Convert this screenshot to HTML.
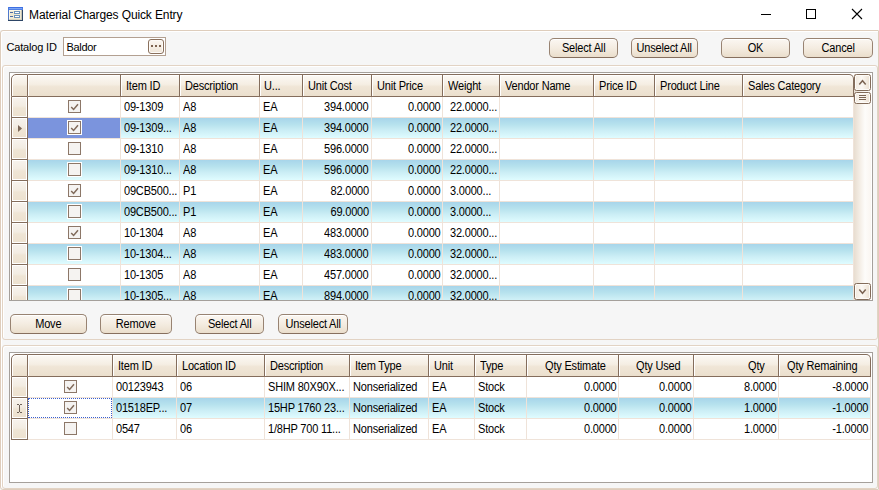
<!DOCTYPE html>
<html><head><meta charset="utf-8"><title>Material Charges Quick Entry</title>
<style>
*{box-sizing:border-box;margin:0;padding:0}
html,body{width:879px;height:490px;overflow:hidden;background:#f6f6f6}
body{position:relative;font-family:"Liberation Sans",sans-serif;font-size:11px;color:#000;letter-spacing:-0.18px}
.a{position:absolute}
.t{position:absolute;white-space:nowrap;line-height:20px;height:20px}
.m{font-size:12px;letter-spacing:-0.2px;transform:scaleX(0.917);transform-origin:0 50%}
.m.r{transform-origin:100% 50%}
.btn span{display:inline-block;font-size:12px;letter-spacing:-0.2px;transform:scaleX(0.917);transform-origin:50% 50%}
.btn{position:absolute;height:20px;border:1px solid #988372;border-radius:5px;background:linear-gradient(#fbf7f2,#f4ece1 50%,#eadecc);box-shadow:inset 0 1px 0 #fff;text-align:center;line-height:18px;border-bottom-color:#866f5e}
.grid{position:absolute;border:1px solid #a5a09b;background:#fff}
.hd{position:absolute;background:linear-gradient(#fcf9f5,#f5eee3 45%,#f0e6d7 55%,#ebdfcd);border-right:1px solid #846d5c;border-top:1px solid #846d5c;border-bottom:1px solid #846d5c;box-shadow:inset 1px 1px 0 #fff}
.rh{position:absolute;background:linear-gradient(#f7f3ee,#f3ece2 45%,#efe5d5 55%,#ede1cf);border-right:1px solid #846d5c;border-bottom:1px solid #846d5c;box-shadow:inset 0 0 0 1px #fff}
.alt{position:absolute;background:linear-gradient(#a7d5ea,#b8e3ee 35%,#cdeff6 65%,#dffcff)}
.vl{position:absolute;width:1px;background:#efe3d9}
.hl{position:absolute;height:1px;background:#efe3d9}
.cb{position:absolute;width:13px;height:13px;border:1px solid #8c7768;background:#f5f3f1;box-shadow:0 0 0 1px #fff}
</style></head>
<body>
<div class="a" style="left:0;top:0;width:879px;height:30px;background:#fff"></div>
<svg class="a" style="left:8px;top:7px" width="15" height="14" viewBox="0 0 15 14">
<defs><linearGradient id="lb" x1="0" y1="0" x2="0" y2="1"><stop offset="0" stop-color="#4a7ae4"/><stop offset="1" stop-color="#5577b4"/></linearGradient></defs>
<rect x="0" y="0" width="15" height="14" fill="#eee8d1"/>
<rect x="1" y="3" width="12" height="1" fill="#fbf7e6"/><rect x="1" y="3" width="1" height="10" fill="#fbf7e6"/>
<rect x="0" y="0" width="15" height="1" fill="#3d6fe2"/><rect x="0" y="1" width="15" height="1" fill="#4c7ce6"/><rect x="1" y="1" width="13" height="1" fill="#7ea6f4"/><rect x="0" y="2" width="15" height="1" fill="#4f7fe6"/>
<rect x="0" y="0" width="1" height="14" fill="url(#lb)"/>
<rect x="14" y="3" width="1" height="11" fill="#2f4767"/><rect x="13" y="3" width="1" height="10" fill="#c9c6b8"/>
<rect x="0" y="13" width="15" height="1" fill="#2d4566"/><rect x="1" y="12" width="12" height="1" fill="#d9d3bd"/>
<rect x="2" y="5" width="3" height="1" fill="#4a69a6"/><rect x="2" y="9" width="3" height="1" fill="#4a69a6"/>
<rect x="6.5" y="4.5" width="5" height="2" fill="#fff" stroke="#6b92bb" stroke-width="1"/>
<rect x="6.5" y="8.5" width="5" height="2" fill="#fff" stroke="#6b92bb" stroke-width="1"/>
</svg>
<div class="t" style="left:29px;top:5px;font-size:12px;line-height:20px;letter-spacing:-0.12px" id="title">Material Charges Quick Entry</div>
<div class="a" style="left:761px;top:14px;width:10px;height:1px;background:#000"></div>
<div class="a" style="left:806px;top:9px;width:10px;height:10px;border:1px solid #000"></div>
<svg class="a" style="left:851px;top:8px" width="12" height="12" viewBox="0 0 12 12"><path d="M1 1L11 11M11 1L1 11" stroke="#000" stroke-width="1.1" fill="none"/></svg>
<div class="a" style="left:0;top:30px;width:879px;height:460px;border:1px solid #decdbc;border-radius:3px 1px 1px 3px;box-shadow:inset 1px 1px 0 #fff"></div>
<div class="a" style="left:2px;top:65px;width:876px;height:275px;border:1px solid #e2d3c4;border-radius:3px;box-shadow:inset 1px 1px 0 #fff"></div>
<div class="a" style="left:2px;top:345px;width:876px;height:144px;border:1px solid #e2d3c4;border-radius:3px;box-shadow:inset 1px 1px 0 #fff"></div>
<div class="t" style="left:6.5px;top:37px" id="cat">Catalog ID</div>
<div class="a" style="left:63px;top:37px;width:103px;height:19px;border:1px solid #b3a091;background:#fff"></div>
<div class="t" style="left:66.4px;top:37px;letter-spacing:-0.3px" id="bal">Baldor</div>
<div class="a" style="left:148px;top:39px;width:16px;height:15px;border:1px solid #8a705d;border-radius:3px;background:linear-gradient(#fbf7f2,#efe5d8);box-shadow:inset 0 0 0 1px #fdfbf8"></div>
<div class="a" style="left:151px;top:45px;width:2px;height:2px;background:#7d6350"></div>
<div class="a" style="left:155px;top:45px;width:2px;height:2px;background:#7d6350"></div>
<div class="a" style="left:159px;top:45px;width:2px;height:2px;background:#7d6350"></div>
<div class="btn" style="left:549px;top:38px;width:69px"><span>Select All</span></div>
<div class="btn" style="left:631px;top:38px;width:67px"><span>Unselect All</span></div>
<div class="btn" style="left:721px;top:38px;width:69px"><span>OK</span></div>
<div class="btn" style="left:803px;top:38px;width:70px"><span>Cancel</span></div>
<div class="btn" style="left:10px;top:314px;width:77px"><span>Move</span></div>
<div class="btn" style="left:100px;top:314px;width:72px"><span>Remove</span></div>
<div class="btn" style="left:195px;top:314px;width:69px"><span>Select All</span></div>
<div class="btn" style="left:278px;top:314px;width:70px"><span>Unselect All</span></div>
<div class="grid" style="left:9px;top:72px;width:864px;height:229px;overflow:hidden">
<div class="hd" style="left:1px;top:1px;width:17px;height:23px;border-top-left-radius:5px;border-left:1px solid #846d5c;"></div>
<div class="hd" style="left:18px;top:1px;width:93px;height:23px;"></div>
<div class="hd" style="left:111px;top:1px;width:59px;height:23px;"></div>
<div class="hd" style="left:170px;top:1px;width:80px;height:23px;"></div>
<div class="hd" style="left:250px;top:1px;width:43px;height:23px;"></div>
<div class="hd" style="left:293px;top:1px;width:69px;height:23px;"></div>
<div class="hd" style="left:362px;top:1px;width:71px;height:23px;"></div>
<div class="hd" style="left:433px;top:1px;width:57px;height:23px;"></div>
<div class="hd" style="left:490px;top:1px;width:94px;height:23px;"></div>
<div class="hd" style="left:584px;top:1px;width:61px;height:23px;"></div>
<div class="hd" style="left:645px;top:1px;width:88px;height:23px;"></div>
<div class="hd" style="left:733px;top:1px;width:111px;height:23px;border-top-right-radius:5px;"></div>
<div class="t m" style="left:116px;top:3px">Item ID</div>
<div class="t m" style="left:175px;top:3px">Description</div>
<div class="t m" style="left:254px;top:3px">U...</div>
<div class="t m" style="left:298px;top:3px">Unit Cost</div>
<div class="t m" style="left:367px;top:3px">Unit Price</div>
<div class="t m" style="left:438px;top:3px">Weight</div>
<div class="t m" style="left:495px;top:3px">Vendor Name</div>
<div class="t m" style="left:589px;top:3px">Price ID</div>
<div class="t m" style="left:650px;top:3px">Product Line</div>
<div class="t m" style="left:738px;top:3px">Sales Category</div>
<div class="rh" style="left:1px;top:24px;width:17px;height:21px;border-left:1px solid #846d5c"></div>
<div class="hl" style="left:18px;top:44px;width:826px"></div>
<div class="cb" style="left:58px;top:27px"></div>
<svg class="a" style="left:58px;top:27px" width="13" height="13" viewBox="0 0 13 13"><path d="M3.2 6.9L5.6 9.4L10 4.3" stroke="#806a5a" stroke-width="1.5" fill="none"/></svg>
<div class="t m" style="left:114px;top:24px">09-1309</div>
<div class="t m" style="left:173px;top:24px">A8</div>
<div class="t m" style="left:253px;top:24px">EA</div>
<div class="t m r" style="right:503.4px;top:24px">394.0000</div>
<div class="t m r" style="right:431.4px;top:24px">0.0000</div>
<div class="t m" style="left:440px;top:24px">22.0000...</div>
<div class="rh" style="left:1px;top:45px;width:17px;height:21px;border-left:1px solid #846d5c"></div>
<div class="alt" style="left:18px;top:45px;width:826px;height:20px"></div>
<div class="a" style="left:18px;top:45px;width:92px;height:20px;background:#7b94dd"></div>
<div class="hl" style="left:18px;top:65px;width:826px"></div>
<div class="cb" style="left:58px;top:48px"></div>
<svg class="a" style="left:58px;top:48px" width="13" height="13" viewBox="0 0 13 13"><path d="M3.2 6.9L5.6 9.4L10 4.3" stroke="#806a5a" stroke-width="1.5" fill="none"/></svg>
<div class="t m" style="left:114px;top:45px">09-1309...</div>
<div class="t m" style="left:173px;top:45px">A8</div>
<div class="t m" style="left:253px;top:45px">EA</div>
<div class="t m r" style="right:503.4px;top:45px">394.0000</div>
<div class="t m r" style="right:431.4px;top:45px">0.0000</div>
<div class="t m" style="left:440px;top:45px">22.0000...</div>
<div class="rh" style="left:1px;top:66px;width:17px;height:21px;border-left:1px solid #846d5c"></div>
<div class="hl" style="left:18px;top:86px;width:826px"></div>
<div class="cb" style="left:58px;top:69px"></div>
<div class="t m" style="left:114px;top:66px">09-1310</div>
<div class="t m" style="left:173px;top:66px">A8</div>
<div class="t m" style="left:253px;top:66px">EA</div>
<div class="t m r" style="right:503.4px;top:66px">596.0000</div>
<div class="t m r" style="right:431.4px;top:66px">0.0000</div>
<div class="t m" style="left:440px;top:66px">22.0000...</div>
<div class="rh" style="left:1px;top:87px;width:17px;height:21px;border-left:1px solid #846d5c"></div>
<div class="alt" style="left:18px;top:87px;width:826px;height:20px"></div>
<div class="hl" style="left:18px;top:107px;width:826px"></div>
<div class="cb" style="left:58px;top:90px"></div>
<div class="t m" style="left:114px;top:87px">09-1310...</div>
<div class="t m" style="left:173px;top:87px">A8</div>
<div class="t m" style="left:253px;top:87px">EA</div>
<div class="t m r" style="right:503.4px;top:87px">596.0000</div>
<div class="t m r" style="right:431.4px;top:87px">0.0000</div>
<div class="t m" style="left:440px;top:87px">22.0000...</div>
<div class="rh" style="left:1px;top:108px;width:17px;height:21px;border-left:1px solid #846d5c"></div>
<div class="hl" style="left:18px;top:128px;width:826px"></div>
<div class="cb" style="left:58px;top:111px"></div>
<svg class="a" style="left:58px;top:111px" width="13" height="13" viewBox="0 0 13 13"><path d="M3.2 6.9L5.6 9.4L10 4.3" stroke="#806a5a" stroke-width="1.5" fill="none"/></svg>
<div class="t m" style="left:114px;top:108px">09CB500...</div>
<div class="t m" style="left:173px;top:108px">P1</div>
<div class="t m" style="left:253px;top:108px">EA</div>
<div class="t m r" style="right:503.4px;top:108px">82.0000</div>
<div class="t m r" style="right:431.4px;top:108px">0.0000</div>
<div class="t m" style="left:440px;top:108px">3.0000...</div>
<div class="rh" style="left:1px;top:129px;width:17px;height:21px;border-left:1px solid #846d5c"></div>
<div class="alt" style="left:18px;top:129px;width:826px;height:20px"></div>
<div class="hl" style="left:18px;top:149px;width:826px"></div>
<div class="cb" style="left:58px;top:132px"></div>
<div class="t m" style="left:114px;top:129px">09CB500...</div>
<div class="t m" style="left:173px;top:129px">P1</div>
<div class="t m" style="left:253px;top:129px">EA</div>
<div class="t m r" style="right:503.4px;top:129px">69.0000</div>
<div class="t m r" style="right:431.4px;top:129px">0.0000</div>
<div class="t m" style="left:440px;top:129px">3.0000...</div>
<div class="rh" style="left:1px;top:150px;width:17px;height:21px;border-left:1px solid #846d5c"></div>
<div class="hl" style="left:18px;top:170px;width:826px"></div>
<div class="cb" style="left:58px;top:153px"></div>
<svg class="a" style="left:58px;top:153px" width="13" height="13" viewBox="0 0 13 13"><path d="M3.2 6.9L5.6 9.4L10 4.3" stroke="#806a5a" stroke-width="1.5" fill="none"/></svg>
<div class="t m" style="left:114px;top:150px">10-1304</div>
<div class="t m" style="left:173px;top:150px">A8</div>
<div class="t m" style="left:253px;top:150px">EA</div>
<div class="t m r" style="right:503.4px;top:150px">483.0000</div>
<div class="t m r" style="right:431.4px;top:150px">0.0000</div>
<div class="t m" style="left:440px;top:150px">32.0000...</div>
<div class="rh" style="left:1px;top:171px;width:17px;height:21px;border-left:1px solid #846d5c"></div>
<div class="alt" style="left:18px;top:171px;width:826px;height:20px"></div>
<div class="hl" style="left:18px;top:191px;width:826px"></div>
<div class="cb" style="left:58px;top:174px"></div>
<div class="t m" style="left:114px;top:171px">10-1304...</div>
<div class="t m" style="left:173px;top:171px">A8</div>
<div class="t m" style="left:253px;top:171px">EA</div>
<div class="t m r" style="right:503.4px;top:171px">483.0000</div>
<div class="t m r" style="right:431.4px;top:171px">0.0000</div>
<div class="t m" style="left:440px;top:171px">32.0000...</div>
<div class="rh" style="left:1px;top:192px;width:17px;height:21px;border-left:1px solid #846d5c"></div>
<div class="hl" style="left:18px;top:212px;width:826px"></div>
<div class="cb" style="left:58px;top:195px"></div>
<div class="t m" style="left:114px;top:192px">10-1305</div>
<div class="t m" style="left:173px;top:192px">A8</div>
<div class="t m" style="left:253px;top:192px">EA</div>
<div class="t m r" style="right:503.4px;top:192px">457.0000</div>
<div class="t m r" style="right:431.4px;top:192px">0.0000</div>
<div class="t m" style="left:440px;top:192px">32.0000...</div>
<div class="rh" style="left:1px;top:213px;width:17px;height:21px;border-left:1px solid #846d5c"></div>
<div class="alt" style="left:18px;top:213px;width:826px;height:20px"></div>
<div class="hl" style="left:18px;top:233px;width:826px"></div>
<div class="cb" style="left:58px;top:216px"></div>
<div class="t m" style="left:114px;top:213px">10-1305...</div>
<div class="t m" style="left:173px;top:213px">A8</div>
<div class="t m" style="left:253px;top:213px">EA</div>
<div class="t m r" style="right:503.4px;top:213px">894.0000</div>
<div class="t m r" style="right:431.4px;top:213px">0.0000</div>
<div class="t m" style="left:440px;top:213px">32.0000...</div>
<div class="vl" style="left:110px;top:24px;height:210px"></div>
<div class="vl" style="left:169px;top:24px;height:210px"></div>
<div class="vl" style="left:249px;top:24px;height:210px"></div>
<div class="vl" style="left:292px;top:24px;height:210px"></div>
<div class="vl" style="left:361px;top:24px;height:210px"></div>
<div class="vl" style="left:432px;top:24px;height:210px"></div>
<div class="vl" style="left:489px;top:24px;height:210px"></div>
<div class="vl" style="left:583px;top:24px;height:210px"></div>
<div class="vl" style="left:644px;top:24px;height:210px"></div>
<div class="vl" style="left:732px;top:24px;height:210px"></div>
<div class="vl" style="left:843px;top:24px;height:210px"></div>
<svg class="a" style="left:8px;top:52px" width="4" height="7" viewBox="0 0 4 7"><path d="M0 0L4 3.5L0 7Z" fill="#7d6858"/></svg>
<div class="a" style="left:844px;top:1px;width:17px;height:226px;background:linear-gradient(90deg,#e8ddd0,#f4eee6 35%,#fdfcfa 65%,#faf6f1)"></div>
<div class="a" style="left:844px;top:1px;width:17px;height:17px;border:1px solid #836c5a;border-radius:2.5px;background:linear-gradient(90deg,#f1e8dc,#fbf8f4 45%,#f5eee5 70%,#ebdfd0);box-shadow:inset 0 0 0 1px #fdfbf8"></div>
<svg class="a" style="left:844px;top:1px" width="17" height="17" viewBox="0 0 17 17"><path d="M5.3 10.4L8.5 6.7L11.7 10.4" stroke="#7b6453" stroke-width="1.5" fill="none"/></svg>
<div class="a" style="left:844px;top:19px;width:17px;height:12px;border:1px solid #836c5a;border-radius:2.5px;background:linear-gradient(90deg,#f1e8dc,#fbf8f4 45%,#f5eee5 70%,#ebdfd0);box-shadow:inset 0 0 0 1px #fdfbf8"></div>
<div class="a" style="left:849px;top:22px;width:7px;height:1px;background:#7b6453"></div>
<div class="a" style="left:849px;top:24px;width:7px;height:1px;background:#7b6453"></div>
<div class="a" style="left:849px;top:26px;width:7px;height:1px;background:#7b6453"></div>
<div class="a" style="left:844px;top:210px;width:17px;height:17px;border:1px solid #836c5a;border-radius:2.5px;background:linear-gradient(90deg,#f1e8dc,#fbf8f4 45%,#f5eee5 70%,#ebdfd0);box-shadow:inset 0 0 0 1px #fdfbf8"></div>
<svg class="a" style="left:844px;top:210px" width="17" height="17" viewBox="0 0 17 17"><path d="M5.3 6.6L8.5 10.3L11.7 6.6" stroke="#7b6453" stroke-width="1.5" fill="none"/></svg>
</div>
<div class="grid" style="left:9px;top:352px;width:864px;height:131px;overflow:hidden">
<div class="hd" style="left:1px;top:1px;width:17px;height:23px;border-top-left-radius:5px;border-left:1px solid #846d5c;"></div>
<div class="hd" style="left:18px;top:1px;width:85px;height:23px;"></div>
<div class="hd" style="left:103px;top:1px;width:64px;height:23px;"></div>
<div class="hd" style="left:167px;top:1px;width:88px;height:23px;"></div>
<div class="hd" style="left:255px;top:1px;width:85px;height:23px;"></div>
<div class="hd" style="left:340px;top:1px;width:79px;height:23px;"></div>
<div class="hd" style="left:419px;top:1px;width:46px;height:23px;"></div>
<div class="hd" style="left:465px;top:1px;width:52px;height:23px;"></div>
<div class="hd" style="left:517px;top:1px;width:92px;height:23px;"></div>
<div class="hd" style="left:609px;top:1px;width:75px;height:23px;"></div>
<div class="hd" style="left:684px;top:1px;width:85px;height:23px;"></div>
<div class="hd" style="left:769px;top:1px;width:92px;height:23px;border-top-right-radius:5px;"></div>
<div class="t m" style="left:108px;top:3px">Item ID</div>
<div class="t m" style="left:172px;top:3px">Location ID</div>
<div class="t m" style="left:260px;top:3px">Description</div>
<div class="t m" style="left:345px;top:3px">Item Type</div>
<div class="t m" style="left:424px;top:3px">Unit</div>
<div class="t m" style="left:470px;top:3px">Type</div>
<div class="t m" style="left:535px;top:3px">Qty Estimate</div>
<div class="t m" style="left:625.5px;top:3px">Qty Used</div>
<div class="t m" style="left:738px;top:3px">Qty</div>
<div class="t m" style="left:777px;top:3px">Qty Remaining</div>
<div class="rh" style="left:1px;top:24px;width:17px;height:21px;border-left:1px solid #846d5c"></div>
<div class="hl" style="left:18px;top:44px;width:843px"></div>
<div class="cb" style="left:54px;top:27px"></div>
<svg class="a" style="left:54px;top:27px" width="13" height="13" viewBox="0 0 13 13"><path d="M3.2 6.9L5.6 9.4L10 4.3" stroke="#806a5a" stroke-width="1.5" fill="none"/></svg>
<div class="t m" style="left:106px;top:24px">00123943</div>
<div class="t m" style="left:170px;top:24px">06</div>
<div class="t m" style="left:258px;top:24px">SHIM 80X90X...</div>
<div class="t m" style="left:343px;top:24px">Nonserialized</div>
<div class="t m" style="left:422px;top:24px">EA</div>
<div class="t m" style="left:468px;top:24px">Stock</div>
<div class="t m r" style="right:255.20000000000005px;top:24px">0.0000</div>
<div class="t m r" style="right:180.20000000000005px;top:24px">0.0000</div>
<div class="t m r" style="right:95.20000000000005px;top:24px">8.0000</div>
<div class="t m r" style="right:4px;top:24px">-8.0000</div>
<div class="rh" style="left:1px;top:45px;width:17px;height:21px;border-left:1px solid #846d5c"></div>
<div class="alt" style="left:18px;top:45px;width:843px;height:20px"></div>
<div class="a" style="left:18px;top:45px;width:84px;height:20px;background:#fff;border:1px dotted #3a5fd0"></div>
<div class="hl" style="left:18px;top:65px;width:843px"></div>
<div class="cb" style="left:54px;top:48px"></div>
<svg class="a" style="left:54px;top:48px" width="13" height="13" viewBox="0 0 13 13"><path d="M3.2 6.9L5.6 9.4L10 4.3" stroke="#806a5a" stroke-width="1.5" fill="none"/></svg>
<div class="t m" style="left:106px;top:45px">01518EP...</div>
<div class="t m" style="left:170px;top:45px">07</div>
<div class="t m" style="left:258px;top:45px">15HP 1760 23...</div>
<div class="t m" style="left:343px;top:45px">Nonserialized</div>
<div class="t m" style="left:422px;top:45px">EA</div>
<div class="t m" style="left:468px;top:45px">Stock</div>
<div class="t m r" style="right:255.20000000000005px;top:45px">0.0000</div>
<div class="t m r" style="right:180.20000000000005px;top:45px">0.0000</div>
<div class="t m r" style="right:95.20000000000005px;top:45px">1.0000</div>
<div class="t m r" style="right:4px;top:45px">-1.0000</div>
<div class="rh" style="left:1px;top:66px;width:17px;height:21px;border-left:1px solid #846d5c"></div>
<div class="hl" style="left:18px;top:86px;width:843px"></div>
<div class="cb" style="left:54px;top:69px"></div>
<div class="t m" style="left:106px;top:66px">0547</div>
<div class="t m" style="left:170px;top:66px">06</div>
<div class="t m" style="left:258px;top:66px">1/8HP 700 11...</div>
<div class="t m" style="left:343px;top:66px">Nonserialized</div>
<div class="t m" style="left:422px;top:66px">EA</div>
<div class="t m" style="left:468px;top:66px">Stock</div>
<div class="t m r" style="right:255.20000000000005px;top:66px">0.0000</div>
<div class="t m r" style="right:180.20000000000005px;top:66px">0.0000</div>
<div class="t m r" style="right:95.20000000000005px;top:66px">1.0000</div>
<div class="t m r" style="right:4px;top:66px">-1.0000</div>
<div class="vl" style="left:102px;top:24px;height:63px"></div>
<div class="vl" style="left:166px;top:24px;height:63px"></div>
<div class="vl" style="left:254px;top:24px;height:63px"></div>
<div class="vl" style="left:339px;top:24px;height:63px"></div>
<div class="vl" style="left:418px;top:24px;height:63px"></div>
<div class="vl" style="left:464px;top:24px;height:63px"></div>
<div class="vl" style="left:516px;top:24px;height:63px"></div>
<div class="vl" style="left:608px;top:24px;height:63px"></div>
<div class="vl" style="left:683px;top:24px;height:63px"></div>
<div class="vl" style="left:768px;top:24px;height:63px"></div>
<div class="vl" style="left:860px;top:24px;height:63px"></div>
<svg class="a" style="left:7px;top:51px" width="5" height="9" viewBox="0 0 5 9"><path d="M0 0.5H2M3 0.5H5M2.5 1V8M0 8.5H2M3 8.5H5" stroke="#6e6259" stroke-width="1" fill="none"/></svg>
</div>
</body></html>
